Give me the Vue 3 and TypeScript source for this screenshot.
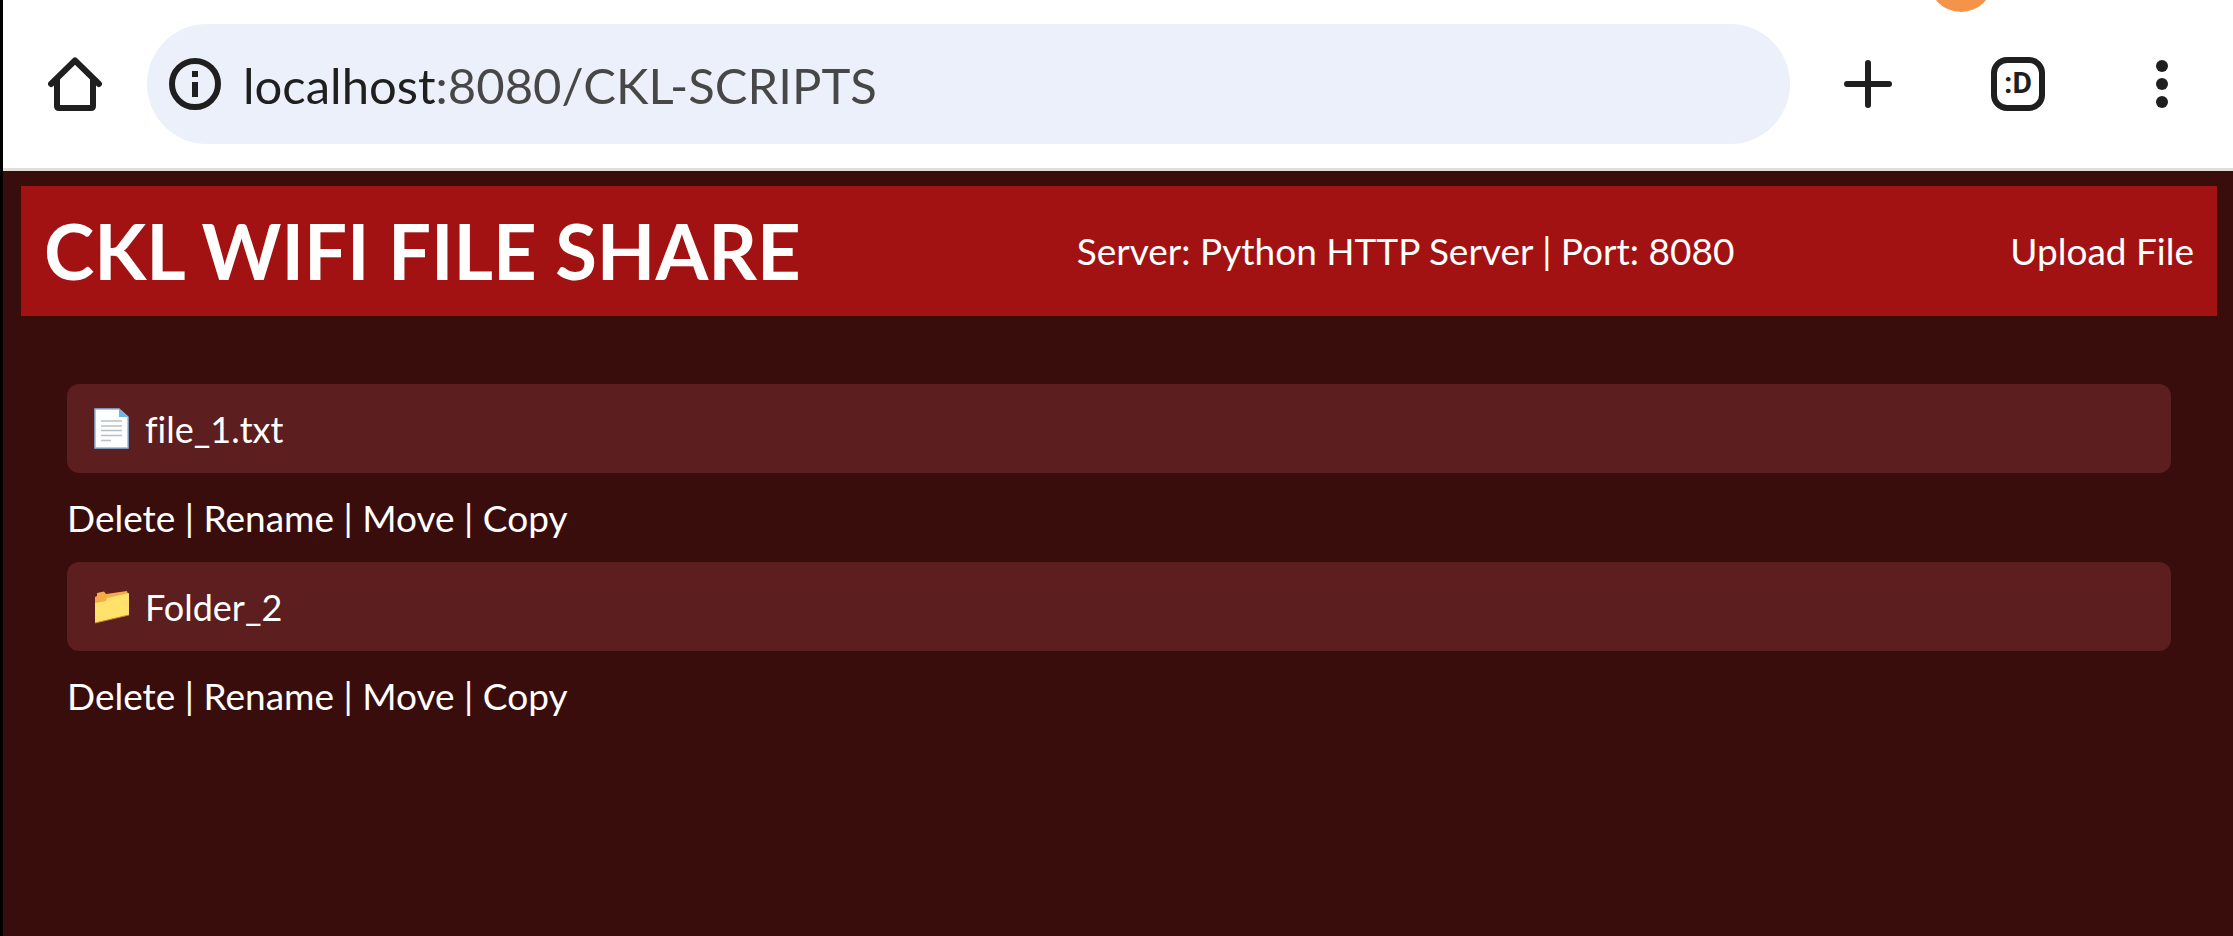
<script setup lang="ts">
import { ref } from 'vue'

interface Entry {
  name: string
  kind: 'file' | 'folder'
}

const address = ref('localhost:8080/CKL-SCRIPTS')
const entries: Entry[] = [
  { name: 'file_1.txt', kind: 'file' },
  { name: 'Folder_2', kind: 'folder' },
]
const actions: string[] = ['Delete', 'Rename', 'Move', 'Copy']
</script>

<template>
  <div class="screen">
    <div class="toolbar">
      <button class="tool home" type="button" aria-label="Home">
        <svg width="54" height="54" viewBox="0 0 54 54" fill="none" stroke="#1f1f1f" stroke-width="6" stroke-linecap="round" stroke-linejoin="round">
          <path d="M3 27 27 3.500 51 27" />
          <path d="M9 22V49Q9 51 11 51H43Q45 51 45 49V22" stroke-linecap="butt" />
        </svg>
      </button>
      <div class="omnibox">
        <button class="info" type="button" aria-label="Site information">
          <svg width="52" height="52" viewBox="0 0 52 52">
            <circle cx="26" cy="26" r="23" fill="none" stroke="#1f1f1f" stroke-width="6" />
            <path d="M23 13h6v6h-6zM23 24h6v15h-6z" fill="#1f1f1f" />
          </svg>
        </button>
        <input v-model="address" class="address" type="text" aria-label="Address" spellcheck="false" />
      </div>
      <button class="tool add" type="button" aria-label="New tab">
        <svg width="48" height="48" viewBox="0 0 48 48" stroke="#1f1f1f" stroke-width="6" stroke-linecap="round">
          <path d="M3 24H45M24 3V45" />
        </svg>
      </button>
      <button class="tool" type="button" aria-label="Open tabs"><span class="tabs">:D</span></button>
      <button class="tool menu" type="button" aria-label="Menu">
        <svg width="12" height="48" viewBox="0 0 12 48" fill="#1f1f1f">
          <circle cx="6" cy="6" r="6" />
          <circle cx="6" cy="24" r="6" />
          <circle cx="6" cy="42" r="6" />
        </svg>
      </button>
      <span class="bubble"></span>
    </div>

    <main class="page">
      <header class="banner">
        <h1>CKL WIFI FILE SHARE</h1>
        <span>Server: Python HTTP Server | Port: 8080</span>
        <a href="#upload">Upload File</a>
      </header>
      <ul class="entries">
        <li v-for="entry in entries" :key="entry.name">
          <a class="entry" :href="'#' + entry.name">
            <svg v-if="entry.kind === 'file'" width="36" height="42" viewBox="0 0 36 42">
              <path d="M1 1H25L34 9V40H1Z" fill="#fdfeff" stroke="#8dbce6" stroke-width="1.500" />
              <path d="M25 1 34 9H25Z" fill="#6db6ea" />
              <path d="M7 13H28M7 18H28M7 22.500H28M7 27.500H28M7 32.500H17" stroke="#b9c0c4" stroke-width="1.500" />
            </svg>
            <svg v-else width="36" height="42" viewBox="0 0 36 42">
              <path d="M1 11 3 10V7L10 5.500 12 8 33 5 34 8V12L1 20Z" fill="#f5ac48" />
              <path d="M1 17 12 15 13 12 35 7V29L1 37Z" fill="#ffe16b" />
              <path d="M1 37 35 29" stroke="#c98b2b" stroke-width="1" />
            </svg>
            <span>{{ entry.name }}</span>
          </a>
          <div class="actions">
            <template v-for="(action, i) in actions" :key="action">
              <template v-if="i > 0"> | </template><a :href="'#' + action.toLowerCase()">{{ action }}</a>
            </template>
          </div>
        </li>
      </ul>
    </main>
  </div>
</template>

<style>
body {
  background: #3a0d0d;
}
</style>

<style scoped>
.screen {
  box-sizing: border-box;
  min-height: 100vh;
  border-left: 3px solid #000;
  background: #3a0d0d;
  font-family: Lato, "Noto Sans", sans-serif;
  font-size: 37px;
  font-variant-ligatures: none;
  line-height: 44px;
  color: #fff;
}
.toolbar {
  position: relative;
  overflow: hidden;
  display: flex;
  align-items: center;
  padding: 24px 0;
  background: #fff;
  border-bottom: 3px solid #e4dedb;
}
button {
  display: flex;
  align-items: center;
  justify-content: center;
  padding: 0;
  border: 0;
  background: none;
  font-family: inherit;
}
.tool {
  flex: none;
  width: 144px;
  height: 120px;
}
.add {
  width: 156px;
}
.menu {
  width: 143px;
}
.omnibox {
  flex: 1;
  min-width: 0;
  box-sizing: border-box;
  display: flex;
  align-items: center;
  gap: 22px;
  height: 120px;
  padding: 0 60px 0 22px;
  border-radius: 60px;
  background: #ecf0fa;
}
.address {
  flex: 1;
  min-width: 0;
  height: 64px;
  padding: 2px 0 0;
  border: 0;
  outline: 0;
  font-family: inherit;
  font-size: 49px;
  color: #1f1f1f;
  background: linear-gradient(to right, #1f1f1f 193px, #474747 193px);
  background-clip: text;
  -webkit-text-fill-color: transparent;
}
.tabs {
  box-sizing: border-box;
  width: 54px;
  height: 54px;
  border: 6px solid #1f1f1f;
  border-radius: 16px;
  font-family: Roboto, sans-serif;
  font-size: 30px;
  font-weight: 700;
  line-height: 40px;
  text-align: center;
  color: #1f1f1f;
}
.bubble {
  position: absolute;
  top: -52px;
  right: 240px;
  width: 64px;
  height: 64px;
  border-radius: 50%;
  background: #f4934a;
}
.page {
  padding: 15px 16px 0 18px;
}
.banner {
  display: flex;
  align-items: center;
  justify-content: space-between;
  padding: 21px 23px;
  background: #a31212;
}
h1 {
  margin: 0;
  font-size: 76px;
  line-height: 88px;
}
a {
  color: inherit;
  text-decoration: none;
}
.entries {
  margin: 68px 46px 0;
  padding: 0;
  list-style: none;
}
.entry {
  display: flex;
  align-items: center;
  gap: 15px;
  height: 89px;
  padding: 0 27px;
  border-radius: 12px;
  font-size: 36px;
  background: #5c1e1e;
}
.actions {
  line-height: 89px;
}
</style>
